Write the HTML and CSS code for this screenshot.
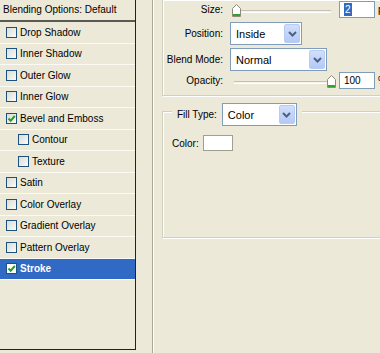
FILE: index.html
```html
<!DOCTYPE html>
<html lang="en">
<head>
  <meta charset="UTF-8">
  <title>Layer Style - Stroke</title>
  <link rel="stylesheet" href="styles.css">
</head>
<body>
  <div class="dialog">
    <div class="styles">
      <div class="styles-head">Blending Options: Default</div>
      <ul class="style-list">
        <li class="style"><span class="check"></span>Drop Shadow</li>
        <li class="style"><span class="check"></span>Inner Shadow</li>
        <li class="style"><span class="check"></span>Outer Glow</li>
        <li class="style"><span class="check"></span>Inner Glow</li>
        <li class="style"><span class="check"><svg viewBox="0 0 9 9" width="9" height="9"><path d="M1.5 4.5 L3.7 6.8 L7.8 2" /></svg></span>Bevel and Emboss</li>
        <li class="style sub"><span class="check"></span>Contour</li>
        <li class="style sub"><span class="check"></span>Texture</li>
        <li class="style"><span class="check"></span>Satin</li>
        <li class="style"><span class="check"></span>Color Overlay</li>
        <li class="style"><span class="check"></span>Gradient Overlay</li>
        <li class="style"><span class="check"></span>Pattern Overlay</li>
        <li class="style selected"><span class="check"><svg viewBox="0 0 9 9" width="9" height="9"><path d="M1.5 4.5 L3.7 6.8 L7.8 2" /></svg></span>Stroke</li>
      </ul>
    </div>

    <div class="options">
      <div class="group structure">
        <div class="row row-size">
          <span class="label">Size:</span>
          <div class="slider">
            <span class="track"></span>
            <svg class="thumb thumb-left" viewBox="0 0 9 13" width="9" height="13"><path d="M0.5 4.5 L4.5 0.5 L8.5 4.5 L8.5 12.5 L0.5 12.5 Z" fill="#fff" stroke="#8c8c7c"/><rect x="1" y="10" width="7" height="2" fill="#2fa32f"/></svg>
          </div>
          <div class="field"><span class="sel-text">2</span></div>
          <span class="unit">px</span>
        </div>
        <div class="row row-position">
          <span class="label">Position:</span>
          <div class="select select-position">
            <span class="select-value">Inside</span>
            <span class="drop"><svg viewBox="0 0 9 6" width="9" height="6"><path d="M1 1 L4.5 4.5 L8 1" /></svg></span>
          </div>
        </div>
        <div class="row row-blend">
          <span class="label">Blend Mode:</span>
          <div class="select select-blend">
            <span class="select-value">Normal</span>
            <span class="drop"><svg viewBox="0 0 9 6" width="9" height="6"><path d="M1 1 L4.5 4.5 L8 1" /></svg></span>
          </div>
        </div>
        <div class="row row-opacity">
          <span class="label">Opacity:</span>
          <div class="slider">
            <span class="track"></span>
            <svg class="thumb thumb-right" viewBox="0 0 9 13" width="9" height="13"><path d="M0.5 4.5 L4.5 0.5 L8.5 4.5 L8.5 12.5 L0.5 12.5 Z" fill="#fff" stroke="#8c8c7c"/><rect x="1" y="10" width="7" height="2" fill="#2fa32f"/></svg>
          </div>
          <div class="field">100</div>
          <span class="unit">%</span>
        </div>
      </div>

      <div class="group fill">
        <div class="legend">
          <span class="legend-label">Fill Type:</span>
          <div class="select select-fill">
            <span class="select-value">Color</span>
            <span class="drop"><svg viewBox="0 0 9 6" width="9" height="6"><path d="M1 1 L4.5 4.5 L8 1" /></svg></span>
          </div>
        </div>
        <div class="color-row">
          <span class="color-label">Color:</span>
          <span class="swatch"></span>
        </div>
      </div>
    </div>
  </div>
</body>
</html>
```

FILE: styles.css
```css
/* General Reset */
* {
  margin: 0;
  padding: 0;
  box-sizing: border-box;
}

body {
  background: #ece9d8;
  color: #000;
  font-family: "Liberation Sans", Arial, sans-serif;
  font-size: 10px;
  width: 380px;
  height: 353px;
  overflow: hidden;
}

.dialog {
  display: flex;
  align-items: flex-start;
}

/* Styles list on the left */
.styles {
  width: 136px;
  height: 350px;
  flex-shrink: 0;
  background: #ece9d8;
  border-right: 1px solid #222;
  border-bottom: 1px solid #222;
}

.styles-head {
  height: 22px;
  padding: 4px 0 0 3px;
  border-bottom: 2px solid #5a5a55;
}

.style-list {
  list-style: none;
}

.style {
  display: flex;
  align-items: center;
  height: 21.5px;
  padding-left: 6px;
  border-bottom: 1px solid #fbfaf5;
}

.style.sub {
  padding-left: 18px;
}

.check {
  width: 11px;
  height: 11px;
  margin-right: 3px;
  border: 1px solid #1c5180;
  background: linear-gradient(135deg, #dcdcd4, #fbfbf8);
  display: flex;
  align-items: center;
  justify-content: center;
}

.check svg path {
  fill: none;
  stroke: #21a121;
  stroke-width: 2;
}

.style.selected {
  background: #316ac5;
  color: #fff;
  font-weight: bold;
}

.style.selected .check {
  background: #fff;
  border-color: #1c5180;
}

/* Options on the right */
.options {
  margin-left: 16px;
  width: 240px;
  height: 353px;
  flex-shrink: 0;
  border-left: 1px solid #aca899;
  box-shadow: inset 1px 0 0 #fff;
  padding-left: 9px;
}

.group {
  border: 1px solid #d0d0bf;
  box-shadow: inset 1px 1px 0 #fff, 1px 1px 0 #fff;
  width: 260px;
}

.structure {
  border-top: none;
  padding: 1px 0 6px;
}

.row {
  display: flex;
  align-items: center;
}

.label {
  width: 60px;
  margin-right: 7px;
  text-align: right;
}

.row-size,
.row-opacity {
  height: 17px;
}

.row-position {
  margin-top: 4px;
}

.row-blend {
  margin-top: 3px;
}

.row-opacity {
  margin-top: 1px;
}

.slider {
  position: relative;
  width: 105px;
  height: 17px;
  margin-right: 4px;
}

.track {
  position: absolute;
  left: 4px;
  right: 4px;
  top: 9px;
  height: 3px;
  border-top: 1px solid #c3c1b3;
  background: #f4f3ee;
  border-bottom: 1px solid #fff;
}

.thumb {
  position: absolute;
  top: 3px;
}

.thumb-left {
  left: 2px;
}

.thumb-right {
  left: 97px;
}

.field {
  width: 36px;
  height: 17px;
  border: 1px solid #7f9db9;
  background: #fff;
  padding: 1px 0 0 4px;
  line-height: 14px;
}

.sel-text {
  display: inline-block;
  background: #316ac5;
  color: #fff;
  padding: 0 1px;
  line-height: 13px;
}

.unit {
  margin-left: 3px;
}

.select {
  display: flex;
  align-items: center;
  justify-content: space-between;
  height: 23px;
  border: 1px solid #7f9db9;
  background: #fff;
  padding: 1px;
}

.select-position {
  width: 72px;
}

.select-blend {
  width: 97px;
}

.select-fill {
  width: 75px;
}

.select-value {
  padding-left: 4px;
  font-size: 11px;
}

.drop {
  width: 16px;
  height: 19px;
  background: linear-gradient(#d0dffc, #b4c9f5);
  border: 1px solid #b9cbf3;
  border-radius: 2px;
  display: flex;
  align-items: center;
  justify-content: center;
}

.drop svg path {
  fill: none;
  stroke: #4d6185;
  stroke-width: 2;
}

/* Fill group */
.fill {
  margin-top: 15px;
  padding: 0 0 86px;
}

.legend {
  display: flex;
  align-items: center;
  width: fit-content;
  margin: -9px 0 0 9px;
  padding: 0 5px;
  background: #ece9d8;
}

.legend-label {
  margin-right: 5px;
}

.color-row {
  display: flex;
  align-items: center;
  margin: 9px 0 0 9px;
}

.color-label {
  margin-right: 4px;
}

.swatch {
  width: 30px;
  height: 16px;
  border: 1px solid #a0a090;
  background: #fff;
}
```
